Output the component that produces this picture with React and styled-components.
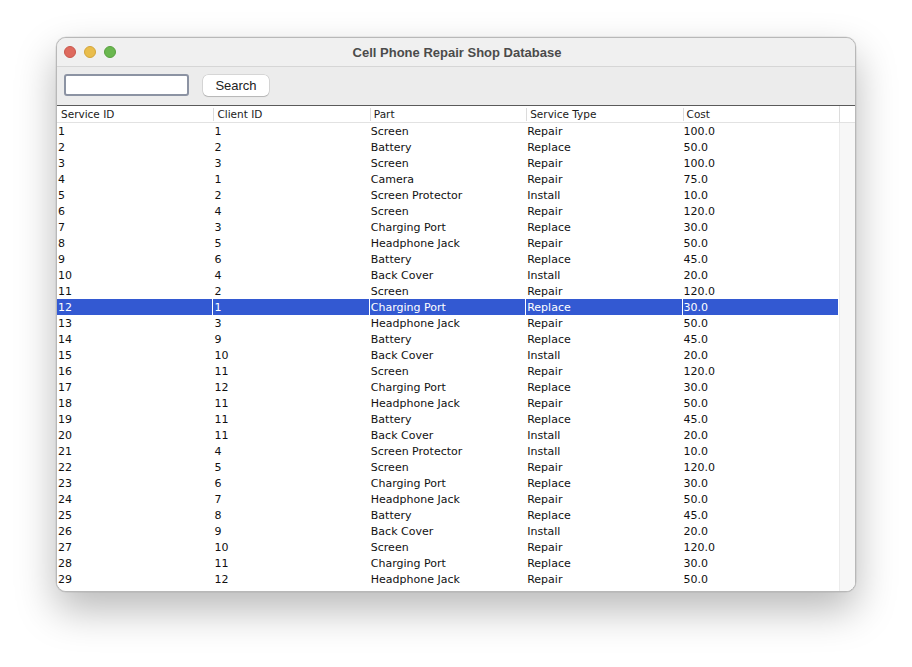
import React from "react"
import styled, { createGlobalStyle } from "styled-components"

const rows = [
  [1, 1, "Screen", "Repair", "100.0"],
  [2, 2, "Battery", "Replace", "50.0"],
  [3, 3, "Screen", "Repair", "100.0"],
  [4, 1, "Camera", "Repair", "75.0"],
  [5, 2, "Screen Protector", "Install", "10.0"],
  [6, 4, "Screen", "Repair", "120.0"],
  [7, 3, "Charging Port", "Replace", "30.0"],
  [8, 5, "Headphone Jack", "Repair", "50.0"],
  [9, 6, "Battery", "Replace", "45.0"],
  [10, 4, "Back Cover", "Install", "20.0"],
  [11, 2, "Screen", "Repair", "120.0"],
  [12, 1, "Charging Port", "Replace", "30.0"],
  [13, 3, "Headphone Jack", "Repair", "50.0"],
  [14, 9, "Battery", "Replace", "45.0"],
  [15, 10, "Back Cover", "Install", "20.0"],
  [16, 11, "Screen", "Repair", "120.0"],
  [17, 12, "Charging Port", "Replace", "30.0"],
  [18, 11, "Headphone Jack", "Repair", "50.0"],
  [19, 11, "Battery", "Replace", "45.0"],
  [20, 11, "Back Cover", "Install", "20.0"],
  [21, 4, "Screen Protector", "Install", "10.0"],
  [22, 5, "Screen", "Repair", "120.0"],
  [23, 6, "Charging Port", "Replace", "30.0"],
  [24, 7, "Headphone Jack", "Repair", "50.0"],
  [25, 8, "Battery", "Replace", "45.0"],
  [26, 9, "Back Cover", "Install", "20.0"],
  [27, 10, "Screen", "Repair", "120.0"],
  [28, 11, "Charging Port", "Replace", "30.0"],
  [29, 12, "Headphone Jack", "Repair", "50.0"],
]

const columns = ["Service ID", "Client ID", "Part", "Service Type", "Cost"]

const SELECTED = 12

const App = () => {
  return (
    <Page>
      <GlobalStyle />
      <Window>
        <TitleBar>
          <Lights>
            <Light color="#de6a5e" edge="#c9574c" />
            <Light color="#e9bd4c" edge="#d3a53a" />
            <Light color="#6ab74f" edge="#58a03f" />
          </Lights>
          <Title>Cell Phone Repair Shop Database</Title>
        </TitleBar>
        <Toolbar>
          <SearchInput />
          <Button>Search</Button>
        </Toolbar>
        <TableArea>
          <Table>
            <HeaderRow>
              {columns.map((col) => (
                <HeaderCell key={col}>{col}</HeaderCell>
              ))}
            </HeaderRow>
            <Body>
              {rows.map((row) => (
                <Row key={row[0]} selected={row[0] === SELECTED}>
                  {row.map((value, i) => (
                    <Cell key={i} selected={row[0] === SELECTED}>
                      {value}
                    </Cell>
                  ))}
                </Row>
              ))}
            </Body>
          </Table>
          <Gutter>
            <GutterHead />
            <GutterTrack />
          </Gutter>
        </TableArea>
      </Window>
    </Page>
  )
}

const GlobalStyle = createGlobalStyle`
  body {
    margin: 0;
    background: #ffffff;
    font-family: "DejaVu Sans", sans-serif;
  }
`

const Page = styled.div`
  padding: 37px 0 0 56px;
  width: 912px;
  height: 667px;
  box-sizing: border-box;
  overflow: hidden;
`

const Window = styled.div`
  width: 800px;
  height: 555px;
  box-sizing: border-box;
  border: 1px solid #b8b8b8;
  border-radius: 10px;
  overflow: hidden;
  display: flex;
  flex-direction: column;
  background: #ececec;
  box-shadow: 0 18px 40px rgba(0, 0, 0, 0.28), 0 0 0 0.5px rgba(0, 0, 0, 0.1);
`

const TitleBar = styled.div`
  height: 28px;
  flex-shrink: 0;
  display: flex;
  align-items: center;
  justify-content: center;
  position: relative;
  background: #f0f0f0;
  border-bottom: 1px solid #d6d6d6;
`

const Lights = styled.div`
  position: absolute;
  left: 7px;
  top: 8px;
  display: flex;
  gap: 8px;
`

const Light = styled.span`
  width: 12px;
  height: 12px;
  border-radius: 50%;
  box-sizing: border-box;
  background: ${(p) => p.color};
  border: 0.5px solid ${(p) => p.edge};
`

const Title = styled.div`
  font-family: "Liberation Sans", Arial, sans-serif;
  font-weight: bold;
  font-size: 13px;
  color: #4b4b4b;
  margin-left: 2px;
`

const Toolbar = styled.div`
  height: 38px;
  flex-shrink: 0;
  display: flex;
  align-items: center;
  padding: 0 0 2px 7px;
  gap: 14px;
  box-sizing: border-box;
  background: #ececec;
`

const SearchInput = styled.div`
  width: 125px;
  height: 22px;
  box-sizing: border-box;
  border: 2px solid #8c93a3;
  border-radius: 3px;
  background: #ffffff;
`

const Button = styled.div`
  width: 66px;
  height: 21px;
  box-sizing: border-box;
  display: flex;
  align-items: center;
  justify-content: center;
  background: #ffffff;
  border-radius: 5px;
  box-shadow: 0 0 0 0.5px rgba(0, 0, 0, 0.18), 0 1px 1px rgba(0, 0, 0, 0.15);
  font-family: "Liberation Sans", Arial, sans-serif;
  font-size: 13px;
  color: #222222;
`

const TableArea = styled.div`
  flex: 1;
  display: flex;
  min-height: 0;
  background: #ffffff;
  border-top: 1px solid #5a5a5a;
`

const Table = styled.div`
  width: 782px;
  display: flex;
  flex-direction: column;
  overflow: hidden;
`

const HeaderRow = styled.div`
  display: grid;
  grid-template-columns: repeat(5, 1fr);
  height: 16px;
  flex-shrink: 0;
  border-bottom: 1px solid #e2e2e2;
`

const HeaderCell = styled.div`
  font-size: 10.5px;
  line-height: 16px;
  color: #1a1a1a;
  padding-left: 4px;
  white-space: nowrap;
  position: relative;

  &:not(:first-child)::before {
    content: "";
    position: absolute;
    left: 0;
    top: 2px;
    bottom: 1px;
    width: 1px;
    background: #dcdcdc;
  }
`

const Body = styled.div`
  display: flex;
  flex-direction: column;
`

const Row = styled.div`
  display: grid;
  grid-template-columns: repeat(5, 1fr);
  height: 16px;
  flex-shrink: 0;
  background: ${(p) => (p.selected ? "#3359d2" : "#ffffff")};
`

const Cell = styled.div`
  font-size: 11px;
  line-height: 15px;
  padding: 1px 0 0 1px;
  color: ${(p) => (p.selected ? "#ffffff" : "#111111")};
  white-space: nowrap;
  box-shadow: ${(p) => (p.selected ? "inset -1px 0 0 #ffffff" : "none")};
`

const Gutter = styled.div`
  flex: 1;
  display: flex;
  flex-direction: column;
`

const GutterHead = styled.div`
  height: 16px;
  border-left: 1px solid #dcdcdc;
  border-bottom: 1px solid #e2e2e2;
  background: #ffffff;
`

const GutterTrack = styled.div`
  flex: 1;
  background: #f7f7f7;
  border-left: 1px solid #ececec;
`

export default App
